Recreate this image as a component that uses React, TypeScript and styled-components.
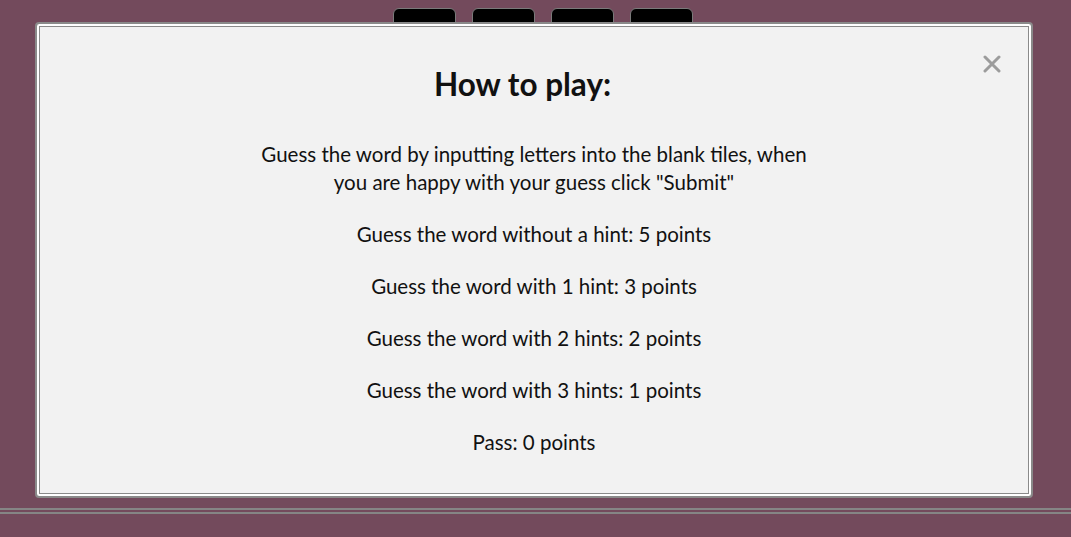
import React from "react";
import styled, { createGlobalStyle } from "styled-components";

const Global = createGlobalStyle`
  html, body { margin: 0; padding: 0; }
  body {
    background: #734a5c;
    font-family: "Lato", "Noto Sans", sans-serif;
    width: 1071px;
    height: 537px;
    overflow: hidden;
  }
`;

const Page = styled.div`
  position: relative;
  width: 1071px;
  height: 537px;
  display: flex;
  flex-direction: column;
`;

const TileRow = styled.div`
  display: flex;
  justify-content: center;
  gap: 16px;
  padding: 8px 0 0 15px;
  height: 492px;
  box-sizing: border-box;
`;

const Tile = styled.div`
  width: 61px;
  height: 60px;
  background: #000;
  border: 1px solid #7a7a7a;
  border-radius: 6px;
`;

const Rule = styled.div<{ $gap: number }>`
  height: 2px;
  background: #858585;
  margin-top: ${(p) => p.$gap}px;
`;

const Dialog = styled.div`
  position: absolute;
  left: 35px;
  top: 22px;
  width: 998px;
  height: 476px;
  box-sizing: border-box;
  background: #f2f2f2;
  border: 2px solid #8a8a8a;
  border-radius: 4px;
  box-shadow: inset 0 0 0 2px #ffffff, inset 0 0 0 3px #8a8a8a;
  padding: 36px 29px 0 40px;
  display: flex;
  flex-direction: column;
  align-items: stretch;
`;

const Header = styled.div`
  display: flex;
  align-items: flex-start;
`;

const Title = styled.h2`
  flex: 1;
  margin: 0 14px 0 0;
  text-align: center;
  font-size: 31.5px;
  font-weight: 700;
  color: #111;
  line-height: 48px;
`;

const Close = styled.button`
  width: 20px;
  height: 20px;
  margin-top: -6px;
  padding: 0;
  border: none;
  background: transparent;
  display: flex;
  align-items: center;
  justify-content: center;
  cursor: pointer;
`;

const Body = styled.div`
  margin-top: 32px;
  margin-right: 11px;
  display: flex;
  flex-direction: column;
  align-items: center;
  gap: 24px;
`;

const Para = styled.p`
  margin: 0;
  text-align: center;
  font-size: 20.5px;
  line-height: 28px;
  color: #111;
  white-space: nowrap;
`;

export default function App() {
  return (
    <>
      <Global />
      <Page>
        <TileRow>
          <Tile />
          <Tile />
          <Tile />
          <Tile />
        </TileRow>
        <Rule $gap={16} />
        <Rule $gap={2} />
        <Dialog>
          <Header>
            <Title>How to play:</Title>
            <Close aria-label="Close">
              <svg width="18" height="18" viewBox="0 0 18 18">
                <path
                  d="M2 2 L16 16 M16 2 L2 16"
                  stroke="#9c9c9c"
                  strokeWidth="3"
                  strokeLinecap="round"
                />
              </svg>
            </Close>
          </Header>
          <Body>
            <Para>
              Guess the word by inputting letters into the blank tiles, when
              <br />
              you are happy with your guess click "Submit"
            </Para>
            <Para>Guess the word without a hint: 5 points</Para>
            <Para>Guess the word with 1 hint: 3 points</Para>
            <Para>Guess the word with 2 hints: 2 points</Para>
            <Para>Guess the word with 3 hints: 1 points</Para>
            <Para>Pass: 0 points</Para>
          </Body>
        </Dialog>
      </Page>
    </>
  );
}
